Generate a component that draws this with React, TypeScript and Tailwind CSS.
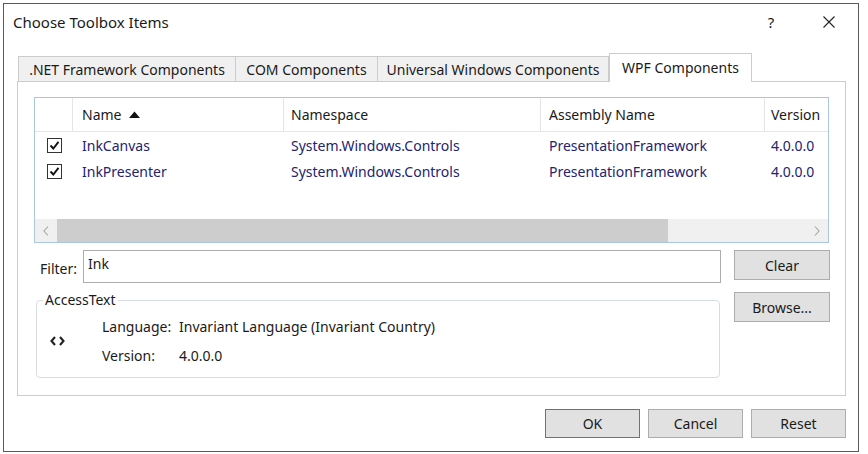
import React from "react";

function Check() {
  return (
    <div className="w-[15px] h-[15px] border border-[#333333] bg-white flex items-center justify-center">
      <svg width="11" height="11" viewBox="0 0 11 11">
        <path d="M1.5 5.5 L4.3 8.5 L9.5 1.8" fill="none" stroke="#111" strokeWidth="1.9" />
      </svg>
    </div>
  );
}

function Row({ name }: { name: string }) {
  return (
    <div className="flex h-[26px] items-center text-[#23236f]">
      <div className="w-[38px] pl-[12px] flex items-center">
        <Check />
      </div>
      <div className="w-[211px] pl-[9px]">{name}</div>
      <div className="w-[257px] pl-[7px]">System.Windows.Controls</div>
      <div className="w-[224px] pl-[8px]">PresentationFramework</div>
      <div className="flex-1 pl-[6px]">4.0.0.0</div>
    </div>
  );
}

function Btn({ label, primary, w = "w-[95px]", h = "h-[29px]" }: { label: string; primary?: boolean; w?: string; h?: string }) {
  return (
    <div
      className={`${w} ${h} flex items-center justify-center bg-[#e1e1e1] border ${
        primary ? "border-[#3a7fc2]" : "border-[#adadad]"
      } text-[#1a1a1a]`}
    >
      {label}
    </div>
  );
}

export default function App() {
  return (
    <div className="w-[868px] h-[454px] bg-white pl-[3px] pt-[3px] font-['Noto_Sans',sans-serif] text-[14px] text-[#1a1a1a] overflow-hidden">
      <div className="w-[856px] h-[449px] border border-[#5a5a5a] flex flex-col bg-white">
        {/* Title bar */}
        <div className="h-[36px] flex items-center pl-[9px] pr-[19px]">
          <div className="text-[15px]">Choose Toolbox Items</div>
          <div className="ml-auto w-[20px] flex justify-center text-[15px]">?</div>
          <div className="ml-[38px] w-[20px] flex justify-center">
            <svg width="12" height="12" viewBox="0 0 12 12">
              <path d="M0.5 0.5 L11.5 11.5 M11.5 0.5 L0.5 11.5" stroke="#222" strokeWidth="1.1" />
            </svg>
          </div>
        </div>

        {/* Tabs */}
        <div className="mt-[13px] h-[28px] flex items-end pl-[14px]">
          <div className="w-[218px] h-[25px] flex items-center justify-center bg-[#f0f0f0] border border-[#cccccc] border-b-0">
            .NET Framework Components
          </div>
          <div className="w-[142px] h-[25px] flex items-center justify-center bg-[#f0f0f0] border border-[#cccccc] border-l-0 border-b-0">
            COM Components
          </div>
          <div className="w-[231px] h-[25px] flex items-center justify-center bg-[#f0f0f0] border border-[#cccccc] border-l-0 border-b-0">
            Universal Windows Components
          </div>
          <div className="relative z-10 w-[143px] h-[29px] mb-[-1px] pb-[2px] flex items-center justify-center bg-white border border-[#cccccc] border-b-0">
            WPF Components
          </div>
        </div>

        {/* Panel */}
        <div className="ml-[13px] w-[829px] h-[315px] border border-[#cccccc] flex flex-col">
          {/* List */}
          <div className="mt-[15px] ml-[16px] w-[795px] h-[146px] border border-[#a9c7e2] flex flex-col">
            <div className="h-[34px] flex border-b border-[#e3e8ee] shrink-0">
              <div className="w-[38px] border-r border-[#e5e5e5]" />
              <div className="w-[211px] pl-[9px] border-r border-[#e5e5e5] flex items-center">
                Name
                <svg className="ml-[8px]" width="11" height="7" viewBox="0 0 11 7">
                  <path d="M0 7 L5.5 0.5 L11 7 Z" fill="#111" />
                </svg>
              </div>
              <div className="w-[257px] pl-[7px] border-r border-[#e5e5e5] flex items-center">Namespace</div>
              <div className="w-[224px] pl-[8px] border-r border-[#e5e5e5] flex items-center">Assembly Name</div>
              <div className="flex-1 pl-[6px] flex items-center">Version</div>
            </div>
            <Row name="InkCanvas" />
            <Row name="InkPresenter" />
            <div className="flex-1" />
            <div className="h-[23px] flex bg-[#f0f0f0] shrink-0">
              <div className="w-[22px] flex items-center justify-center">
                <svg width="6" height="10" viewBox="0 0 6 10">
                  <path d="M5 0.5 L1 5 L5 9.5" fill="none" stroke="#a6a6a6" strokeWidth="1.1" />
                </svg>
              </div>
              <div className="w-[611px] bg-[#cdcdcd]" />
              <div className="flex-1" />
              <div className="w-[22px] flex items-center justify-center">
                <svg width="6" height="10" viewBox="0 0 6 10">
                  <path d="M1 0.5 L5 5 L1 9.5" fill="none" stroke="#a6a6a6" strokeWidth="1.1" />
                </svg>
              </div>
            </div>
          </div>

          {/* Bottom part */}
          <div className="mt-[7px] ml-[16px] flex">
            <div className="w-[687px] flex flex-col">
              <div className="flex items-center h-[33px]">
                <div className="pl-[6px] pt-[3px]">Filter:</div>
                <div className="ml-auto w-[638px] h-[33px] border border-[#acacac] pl-[4px] leading-[26px]">Ink</div>
              </div>
              <fieldset className="mt-[7px] ml-[2px] w-[684px] h-[88px] border border-[#d5dde3] rounded-[4px] px-[6px]">
                <legend className="px-[2px] leading-[20px]">AccessText</legend>
                <div className="flex items-center mt-[2px]">
                  <div className="ml-[7px] w-[15px] flex items-center">
                    <svg width="15" height="10" viewBox="0 0 15 10">
                      <path d="M5 1 L1.5 5 L5 9 M10 1 L13.5 5 L10 9" fill="none" stroke="#222" strokeWidth="2.1" />
                    </svg>
                  </div>
                  <div className="ml-[37px] flex flex-col">
                    <div className="h-[29px] flex items-center">
                      <div className="w-[77px]">Language:</div>
                      <div>Invariant Language (Invariant Country)</div>
                    </div>
                    <div className="h-[29px] flex items-center">
                      <div className="w-[77px]">Version:</div>
                      <div>4.0.0.0</div>
                    </div>
                  </div>
                </div>
              </fieldset>
            </div>
            <div className="ml-[13px] flex flex-col">
              <Btn label="Clear" w="w-[96px]" h="h-[30px]" />
              <div className="mt-[12px]">
                <Btn label="Browse..." w="w-[96px]" h="h-[30px]" />
              </div>
            </div>
          </div>
        </div>

        {/* Bottom buttons */}
        <div className="mt-[13px] flex justify-end gap-[8px] pr-[12px]">
          <Btn label="OK" primary />
          <Btn label="Cancel" />
          <Btn label="Reset" />
        </div>
      </div>
    </div>
  );
}
